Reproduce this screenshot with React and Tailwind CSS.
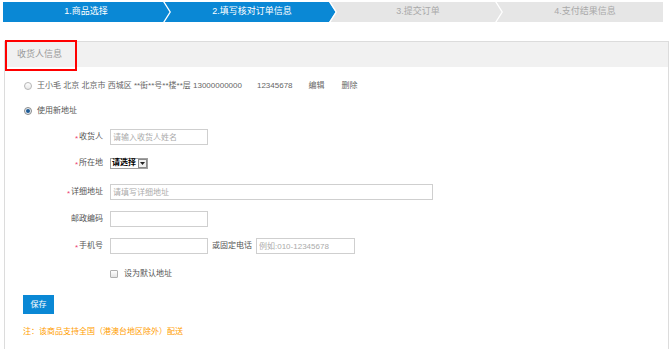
const steps = [
  { label: '1.商品选择', body: 'w-[160px] bg-[#0a88d5] pl-[6px] text-white z-[4]', fill: '#0a88d5', arrow: true },
  { label: '2.填写核对订单信息', body: 'w-[166px] bg-[#0a88d5] pl-[12px] text-white z-[3]', fill: '#0a88d5', arrow: true },
  { label: '3.提交订单', body: 'w-[166px] bg-[#e6e6e6] pl-[12px] text-[#a9a9a9] z-[2]', fill: '#e6e6e6', arrow: true },
  { label: '4.支付结果信息', body: 'flex-1 bg-[#e6e6e6] pl-[12px] text-[#a9a9a9] z-[1]', fill: '#e6e6e6', arrow: false },
]

function StepBar() {
  return (
    <div className="mt-[2px] flex h-[20px] pl-[3px] pr-[8px]">
      {steps.map((s) => (
        <div key={s.label} className={`relative flex h-full items-center justify-center text-[9px] ${s.body}`}>
          <span>{s.label}</span>
          {s.arrow && (
            <svg className="absolute right-[-8px] top-0" width="8" height="20" viewBox="0 0 8 20">
              <polygon points="0,0 6.5,10 0,20" fill={s.fill} />
              <polyline points="0.6,-0.5 7.2,10 0.6,20.5" fill="none" stroke="#fff" strokeWidth="1.3" />
            </svg>
          )}
        </div>
      ))}
    </div>
  )
}

function Label({ text, required }) {
  return (
    <div className="w-[87px] shrink-0 pr-[7px] text-right text-[8px] text-[#555]">
      {required && <span className="mr-[1px] inline-block translate-y-[2px] text-[#ec3f73]">*</span>}
      {text}
    </div>
  )
}

function Field({ w, placeholder }) {
  return (
    <input
      readOnly
      placeholder={placeholder}
      className={`h-[16px] border border-[#cfcfcf] bg-white px-[2px] text-[8px] outline-none placeholder:text-[#ababab] ${w}`}
    />
  )
}

export default function App() {
  return (
    <div className="h-[349px] w-[671px] overflow-hidden bg-white font-['Liberation_Sans','Noto_Sans_CJK_SC',sans-serif]">
      <StepBar />

      {/* receiver panel */}
      <div className="relative ml-[4px] mt-[19px] h-[320px] w-[665px] border-x border-t border-[#dcdcdc]">
        <div className="flex h-[25px] items-center bg-[#f1f1f1] pl-[12px] text-[9px] text-[#999]">
          收货人信息
        </div>
        <div className="absolute left-0 top-[-2px] h-[31px] w-[72px] border-2 border-[#f00]" />

        <div className="flex flex-col pl-[18px]">
          {/* saved address */}
          <div className="mt-[11px] flex h-[16px] items-center text-[8px] text-[#666]">
            <div className="ml-[1px] mr-[5px] h-[8px] w-[8px] rounded-full border border-[#b5b5b5] bg-gradient-to-b from-white to-[#e8e8e8]" />
            <span>王小毛 北京 北京市 西城区 **街**号**楼**层 13000000000</span>
            <span className="ml-[15px]">12345678</span>
            <span className="ml-[16px]">编辑</span>
            <span className="ml-[17px]">删除</span>
          </div>

          {/* new address */}
          <div className="mt-[9px] flex h-[16px] items-center text-[8px] text-[#555]">
            <div className="ml-[1px] mr-[5px] flex h-[8px] w-[8px] items-center justify-center rounded-full border border-[#8a8a8a] bg-[#e9eef4]">
              <div className="h-[4px] w-[4px] rounded-full bg-[#1d5a94]" />
            </div>
            <span>使用新地址</span>
          </div>

          <div className="mt-[10px] flex h-[16px] items-center">
            <Label text="收货人" required />
            <Field w="w-[98px]" placeholder="请输入收货人姓名" />
          </div>

          <div className="mt-[10px] flex h-[16px] items-center">
            <Label text="所在地" required />
            <div className="flex h-[11px] items-center border border-[#a0a0a0] bg-white pl-[1px] text-[8px] text-black">
              <span className="font-bold">请选择</span>
              <div className="ml-[2px] flex h-[9px] w-[9px] items-center justify-center border border-[#8a8a8a] bg-[#f0f0f0]">
                <svg width="5" height="3" viewBox="0 0 5 3">
                  <polygon points="0,0 5,0 2.5,3" fill="#222" />
                </svg>
              </div>
            </div>
          </div>

          <div className="mt-[13px] flex h-[16px] items-center">
            <Label text="详细地址" required />
            <Field w="w-[323px]" placeholder="请填写详细地址" />
          </div>

          <div className="mt-[11px] flex h-[16px] items-center">
            <Label text="邮政编码" />
            <Field w="w-[98px]" />
          </div>

          <div className="mt-[11px] flex h-[16px] items-center">
            <Label text="手机号" required />
            <Field w="w-[98px]" />
            <span className="mx-[4px] text-[8px] text-[#555]">或固定电话</span>
            <Field w="w-[99px]" placeholder="例如:010-12345678" />
          </div>

          <div className="mt-[12px] flex h-[16px] items-center">
            <div className="w-[87px] shrink-0" />
            <div className="mr-[6px] h-[8px] w-[8px] rounded-[1px] border border-[#b0b0b0] bg-gradient-to-b from-white to-[#e4e4e4]" />
            <span className="text-[8px] text-[#555]">设为默认地址</span>
          </div>

          <div className="mt-[13px]">
            <button className="flex h-[19px] w-[31px] items-center justify-center bg-[#0a88d5] text-[8px] text-white">
              保存
            </button>
          </div>

          <div className="mt-[12px] text-[8px] leading-[12px] text-[#ff9d00]">
            注：该商品支持全国（港澳台地区除外）配送
          </div>
        </div>
      </div>
    </div>
  )
}
